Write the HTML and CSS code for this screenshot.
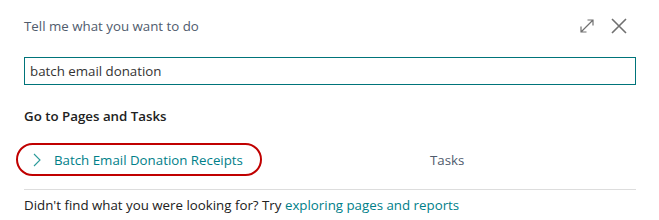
FILE: index.html
```html
<!DOCTYPE html>
<html lang="en">
<head>
<meta charset="utf-8">
<title>Tell me</title>
<link rel="stylesheet" href="styles.css">
</head>
<body>
<div class="dialog">
  <div class="header">
    <span class="title">Tell me what you want to do</span>
    <div class="actions">
      <svg class="icon" width="18" height="18" viewBox="0 0 18 18">
        <path d="M3 15 L15 3 M9.5 3 H15 V8.5 M3 9.5 V15 H8.5" fill="none" stroke="#707070" stroke-width="1.2"/>
      </svg>
      <svg class="icon" width="18" height="18" viewBox="0 0 18 18">
        <path d="M2 2 L16 16 M16 2 L2 16" fill="none" stroke="#707070" stroke-width="1.6"/>
      </svg>
    </div>
  </div>
  <div class="search">batch email donation</div>
  <div class="section">Go to Pages and Tasks</div>
  <div class="row">
    <div class="result">
      <svg class="chev" width="10" height="14" viewBox="0 0 10 14">
        <path d="M2 1 L8 7 L2 13" fill="none" stroke="#2a9a9a" stroke-width="1.1"/>
      </svg>
      <span class="name">Batch Email Donation Receipts</span>
    </div>
    <span class="kind">Tasks</span>
  </div>
  <div class="footer">Didn't find what you were looking for? Try <span class="link">exploring pages and reports</span></div>
</div>
</body>
</html>
```
FILE: styles.css
```css
html, body {
  margin: 0;
  padding: 0;
  background: #ffffff;
}
body {
  font-family: "Open Sans", "Noto Sans", sans-serif;
  font-size: 13.3px;
  color: #212121;
}
.dialog {
  padding: 16px 23px 0 24px;
}
.header {
  display: flex;
  justify-content: space-between;
  align-items: center;
  height: 20px;
}
.title {
  color: #505c6d;
}
.actions {
  display: flex;
  gap: 14px;
  margin-right: 8px;
}
.icon {
  display: block;
}
.search {
  margin-top: 21px;
  height: 26px;
  border: 1px solid #00747a;
  box-sizing: content-box;
  padding: 0 5px;
  line-height: 26px;
  color: #333333;
}
.section {
  margin-top: 22px;
  font-weight: 600;
  line-height: 18px;
}
.row {
  margin-top: 15px;
  display: flex;
  align-items: center;
  height: 39px;
  border-bottom: 1px solid #dddddd;
  padding-bottom: 10px;
}
.result {
  display: flex;
  align-items: center;
  height: 33px;
  margin-left: -8px;
  padding-left: 14px;
  box-sizing: border-box;
  border: 2px solid #c00000;
  border-radius: 18px;
  width: 246px;
}
.chev {
  display: block;
  margin-right: 12px;
}
.name {
  color: #008089;
}
.kind {
  margin-left: 168px;
  color: #505c6d;
}
.footer {
  margin-top: 6px;
  color: #212121;
}
.link {
  color: #008089;
}
```
